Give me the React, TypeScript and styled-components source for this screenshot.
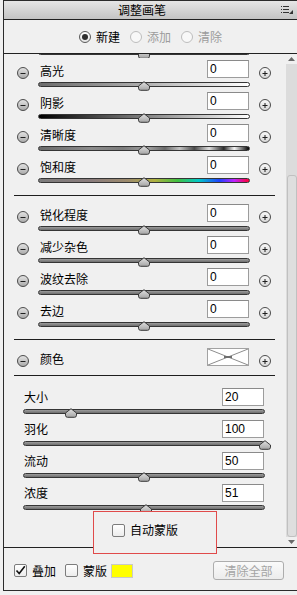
import React from 'react';
import styled, { createGlobalStyle } from 'styled-components';

const GlobalStyle = createGlobalStyle`
  html, body {
    margin: 0;
    padding: 0;
    background: #f0f0f0;
  }
  body {
    font-family: "Liberation Sans", "Noto Sans CJK SC", sans-serif;
    font-size: 12px;
    color: #000;
  }
  * {
    box-sizing: border-box;
  }
`;

// Layout
const Page = styled.div`
  position: relative;
  width: 297px;
  height: 595px;
  background: #f0f0f0;
  overflow: hidden;
`;

const Panel = styled.div`
  margin-left: 3px;
  border-left: 1px solid #2b2b2b;
  border-top: 1px solid #2b2b2b;
  border-bottom: 1px solid #2b2b2b;
  display: flex;
  flex-direction: column;
  background: #f0f0f0;
`;

const Header = styled.div`
  height: 19px;
  border-bottom: 1px solid #222;
  background: linear-gradient(#e6e6e6, #c4c4c4);
  display: flex;
  align-items: center;
  padding: 0 4px 0 114px;
`;

const Title = styled.span`
  flex: 1;
  font-family: "Noto Sans CJK SC", sans-serif;
  font-size: 12px;
  line-height: 18px;
`;

const RadioGroup = styled.div`
  height: 34px;
  border-bottom: 1px solid #222;
  display: flex;
  justify-content: center;
  align-items: center;
  gap: 10px;
  padding-top: 1px;
`;

const RadioItem = styled.label<{ $disabled?: boolean }>`
  display: flex;
  align-items: center;
  gap: 5px;
  color: ${(p) => (p.$disabled ? '#9c9c9c' : '#000')};
  font-family: "Noto Sans CJK SC", sans-serif;
  line-height: 16px;
`;

const RadioDot = styled.span<{ $checked?: boolean; $disabled?: boolean }>`
  width: 12px;
  height: 12px;
  border-radius: 50%;
  border: 1px solid ${(p) => (p.$disabled ? '#bdbdbd' : '#5a5a5a')};
  background: ${(p) => (p.$disabled ? '#f8f8f8' : 'linear-gradient(#ffffff, #e4e4e4)')};
  display: flex;
  align-items: center;
  justify-content: center;

  &::after {
    content: '';
    width: 6px;
    height: 6px;
    border-radius: 50%;
    background: #2e2e2e;
    display: ${(p) => (p.$checked ? 'block' : 'none')};
  }
`;

const ScrollArea = styled.div`
  height: 494px;
  border-bottom: 1px solid #222;
  display: flex;
`;

const Viewport = styled.div`
  flex: 1;
  overflow: hidden;
`;

// the bottom sliver of the row scrolled out above (对比度)
const ScrolledOut = styled.div`
  height: 4px;
  overflow: hidden;
  display: flex;
  flex-direction: column;
  justify-content: flex-end;
`;

const Divider = styled.div<{ $mt: number; $mb: number }>`
  height: 1px;
  background: #1e1e1e;
  margin: ${(p) => p.$mt}px 11px ${(p) => p.$mb}px 10px;
`;

// Adjustment rows
const AdjRow = styled.div`
  height: 32px;
  padding-top: 2px;
`;

const RowTop = styled.div<{ $brush?: boolean }>`
  height: 18px;
  display: flex;
  align-items: ${(p) => (p.$brush ? 'center' : 'flex-start')};
  padding: ${(p) => (p.$brush ? '0 22px 0 19px' : '0 15px 0 13px')};
`;

const RoundBtn = styled.span`
  display: block;
  width: 12px;
  height: 12px;
  margin-top: 7px;
  flex: none;
`;

const Label = styled.span<{ $brush?: boolean }>`
  flex: 1;
  margin-left: ${(p) => (p.$brush ? '1px' : '11px')};
  margin-top: ${(p) => (p.$brush ? '0' : '3px')};
  font-family: "Noto Sans CJK SC", sans-serif;
  line-height: 16px;
`;

const NumBox = styled.div`
  width: 42px;
  height: 18px;
  flex: none;
  border: 1px solid #9c9c9c;
  border-top-color: #8a8a8a;
  background: #fff;
  padding: 0 2px;
  line-height: 16px;
  font-size: 12px;
`;

const ColorBox = styled.div`
  width: 42px;
  height: 18px;
  flex: none;
  border: 1px solid #a2a2a2;
  background: #fff;
  display: flex;
`;

const PlusWrap = styled.span`
  margin-left: 10px;
  flex: none;
  display: block;
  width: 12px;
  height: 12px;
  margin-top: 7px;
`;

const SliderBox = styled.div<{ $ml: number; $w: number; $pt: number }>`
  position: relative;
  height: 12px;
  flex: none;
  margin-left: ${(p) => p.$ml}px;
  width: ${(p) => p.$w}px;
  padding-top: ${(p) => p.$pt}px;
`;

const Track = styled.div<{ $bg: string }>`
  height: 5px;
  border: 1px solid #353535;
  border-radius: 3px;
  background: ${(p) => p.$bg};
`;

const ThumbWrap = styled.span<{ $top: number }>`
  position: absolute;
  top: ${(p) => p.$top}px;
  width: 12px;
  height: 10px;
  transform: translateX(-50%);
  display: block;
`;

const ColorRow = styled.div`
  padding: 8px 15px 9px 13px;
  display: flex;
  align-items: flex-start;
  height: 35px;
`;

// Scrollbar
const ScrollBar = styled.div`
  width: 11px;
  display: flex;
  flex-direction: column;
`;

const ArrowBtn = styled.div`
  height: 10px;
  display: flex;
  align-items: center;
  justify-content: center;
`;

const SbTrack = styled.div`
  flex: 1;
  background: #dcdcdc;
  display: flex;
  flex-direction: column;
  padding: 111px 0 0 1px;
`;

const SbThumb = styled.div`
  flex: 1;
  background: #dedede;
  border: 1px solid #c0c0c0;
  border-radius: 3px;
`;

// Bottom bar
const BottomBar = styled.div`
  height: 42px;
  padding: 3px 13px 0 10px;
  display: flex;
  align-items: center;
`;

const CheckItem = styled.label`
  display: flex;
  align-items: center;
  gap: 5px;
  margin-right: 9px;
  font-family: "Noto Sans CJK SC", sans-serif;
  line-height: 16px;
`;

const CheckBox = styled.span`
  width: 13px;
  height: 13px;
  border: 1px solid #7c7c7c;
  border-radius: 2px;
  background: linear-gradient(#ffffff, #ececec);
  display: flex;
  align-items: center;
  justify-content: center;
`;

const Swatch = styled.span<{ $color: string }>`
  width: 22px;
  height: 14px;
  margin-left: -5px;
  background: ${(p) => p.$color};
  border: 1px solid #c9c9c9;
`;

const ClearButton = styled.button`
  margin-left: auto;
  width: 71px;
  height: 19px;
  border: 1px solid #adadad;
  border-radius: 3px;
  background: linear-gradient(#fafafa, #ececec);
  color: #a4a4a4;
  font-family: "Noto Sans CJK SC", sans-serif;
  font-size: 12px;
  line-height: 16px;
  padding: 0;
`;

// Annotation drawn over the panel
const Annotation = styled.div`
  position: absolute;
  left: 93px;
  top: 511px;
  width: 124px;
  height: 43px;
  border: 1px solid #e04a4a;
  background: #f0f0f0;
  padding: 11px 0 0 18px;
`;

const AutoMask = styled.label`
  display: flex;
  align-items: center;
  gap: 5px;
  font-family: "Noto Sans CJK SC", sans-serif;
  line-height: 14px;
`;

// Icons
const MinusIcon = () => (
  <svg width="12" height="12" viewBox="0 0 12 12">
    <defs>
      <linearGradient id="minusFill" x1="0" y1="0" x2="0" y2="1">
        <stop offset="0" stopColor="#e4e4e4" />
        <stop offset="1" stopColor="#a9a9a9" />
      </linearGradient>
    </defs>
    <circle cx="6" cy="6" r="5.5" fill="url(#minusFill)" stroke="#4c4c4c" />
    <line x1="3.5" y1="6.5" x2="8.5" y2="6.5" stroke="#1f1f1f" />
  </svg>
);

const PlusIcon = () => (
  <svg width="12" height="12" viewBox="0 0 12 12">
    <defs>
      <linearGradient id="plusFill" x1="0" y1="0" x2="0" y2="1">
        <stop offset="0" stopColor="#fbfbfb" />
        <stop offset="1" stopColor="#d6d6d6" />
      </linearGradient>
    </defs>
    <circle cx="6" cy="6" r="5.5" fill="url(#plusFill)" stroke="#4c4c4c" />
    <line x1="3.5" y1="6.5" x2="8.5" y2="6.5" stroke="#1f1f1f" />
    <line x1="6" y1="4" x2="6" y2="9" stroke="#1f1f1f" />
  </svg>
);

const ThumbIcon = () => (
  <svg width="12" height="10" viewBox="0 0 12 10">
    <defs>
      <linearGradient id="thumbFill" x1="0" y1="0" x2="0" y2="1">
        <stop offset="0" stopColor="#e2e2e2" />
        <stop offset="1" stopColor="#a4a4a4" />
      </linearGradient>
    </defs>
    <path
      d="M0.5 5 L6 0.7 L11.5 5 L11.5 7.2 Q11.5 9.3 9.5 9.3 L2.5 9.3 Q0.5 9.3 0.5 7.2 Z"
      fill="url(#thumbFill)"
      stroke="#3a3a3a"
    />
  </svg>
);

const PanelMenuIcon = () => (
  <svg width="12" height="8" viewBox="0 0 12 8">
    <rect x="0" y="0" width="1" height="1" fill="#333" />
    <rect x="0" y="3" width="1" height="1" fill="#333" />
    <rect x="0" y="6" width="1" height="1" fill="#333" />
    <rect x="2" y="0" width="6" height="1" fill="#333" />
    <rect x="2" y="3" width="6" height="1" fill="#333" />
    <rect x="2" y="6" width="6" height="1" fill="#333" />
    <path d="M12 4 L12 8 L8 8 Z" fill="#333" />
  </svg>
);

const CheckMark = () => (
  <svg width="11" height="11" viewBox="0 0 11 11">
    <path d="M1.5 5.5 L4.2 8.5 L9.8 1.2" fill="none" stroke="#111" strokeWidth="1.6" />
  </svg>
);

const ArrowIcon: React.FC<{ down?: boolean }> = ({ down }) => (
  <svg width="7" height="4" viewBox="0 0 7 4">
    <path d={down ? 'M0 0 L7 0 L3.5 4 Z' : 'M0 4 L7 4 L3.5 0 Z'} fill="#6a6a6a" />
  </svg>
);

const NoColorIcon = () => (
  <svg width="40" height="16" viewBox="0 0 40 16">
    <line x1="0" y1="0" x2="40" y2="16" stroke="#8c8c8c" />
    <line x1="40" y1="0" x2="0" y2="16" stroke="#8c8c8c" />
    <rect x="16" y="7" width="8" height="2" fill="#6e6e6e" />
  </svg>
);

// Track backgrounds
const PLAIN = 'linear-gradient(#9c9c9c, #6e6e6e)';
const TRACKS = {
  highlights: 'linear-gradient(to right, #6c6c6c, #a8a8a8 45%, #ffffff)',
  shadows: 'linear-gradient(to right, #000000, #808080 50%, #ffffff)',
  clarity:
    'linear-gradient(to right, #6a6a6a 0%, #8c8c8c 25%, #7c7c7c 40%, #a0a0a0 52%, #6a6a6a 60%, #c4c4c4 67%, #4a4a4a 74%, #dedede 81%, #2a2a2a 88%, #f4f4f4 93%, #000000 100%)',
  saturation:
    'linear-gradient(to right, #7c7c7c 0%, #8a7c7c 25%, #9c8a6c 42%, #b0b040 55%, #40c040 66%, #00c8c8 76%, #2040ff 86%, #c020ff 93%, #ff0030 100%)',
};

interface SliderProps {
  pct: number;
  ml: number;
  w: number;
  bg?: string;
  brush?: boolean;
}

const Slider: React.FC<SliderProps> = ({ pct, ml, w, bg = PLAIN, brush }) => (
  <SliderBox $ml={ml} $w={w} $pt={brush ? 3 : 4}>
    <Track $bg={bg} />
    <ThumbWrap $top={brush ? 1 : 2} style={{ left: `${pct}%` }}>
      <ThumbIcon />
    </ThumbWrap>
  </SliderBox>
);

interface AdjProps {
  label: string;
  value: number;
  bg?: string;
}

const Adjustment: React.FC<AdjProps> = ({ label, value, bg }) => (
  <AdjRow>
    <RowTop>
      <RoundBtn>
        <MinusIcon />
      </RoundBtn>
      <Label>{label}</Label>
      <NumBox>{value}</NumBox>
      <PlusWrap>
        <PlusIcon />
      </PlusWrap>
    </RowTop>
    <Slider pct={(value + 100) / 2} ml={34} w={212} bg={bg} />
  </AdjRow>
);

const BrushSetting: React.FC<{ label: string; value: number }> = ({ label, value }) => (
  <AdjRow>
    <RowTop $brush>
      <Label $brush>{label}</Label>
      <NumBox>{value}</NumBox>
    </RowTop>
    <Slider pct={value} ml={19} w={242} brush />
  </AdjRow>
);

const toneRows: AdjProps[] = [
  { label: '高光', value: 0, bg: TRACKS.highlights },
  { label: '阴影', value: 0, bg: TRACKS.shadows },
  { label: '清晰度', value: 0, bg: TRACKS.clarity },
  { label: '饱和度', value: 0, bg: TRACKS.saturation },
];

const detailRows: AdjProps[] = [
  { label: '锐化程度', value: 0 },
  { label: '减少杂色', value: 0 },
  { label: '波纹去除', value: 0 },
  { label: '去边', value: 0 },
];

const brushRows = [
  { label: '大小', value: 20 },
  { label: '羽化', value: 100 },
  { label: '流动', value: 50 },
  { label: '浓度', value: 51 },
];

export default function App() {
  return (
    <Page>
      <GlobalStyle />
      <Panel>
        <Header>
          <Title>调整画笔</Title>
          <PanelMenuIcon />
        </Header>

        <RadioGroup>
          <RadioItem>
            <RadioDot $checked />
            新建
          </RadioItem>
          <RadioItem $disabled>
            <RadioDot $disabled />
            添加
          </RadioItem>
          <RadioItem $disabled>
            <RadioDot $disabled />
            清除
          </RadioItem>
        </RadioGroup>

        <ScrollArea>
          <Viewport>
            <ScrolledOut>
              <Slider pct={50} ml={34} w={212} />
            </ScrolledOut>
            {toneRows.map((r) => (
              <Adjustment key={r.label} {...r} />
            ))}
            <Divider $mt={9} $mb={6} />
            {detailRows.map((r) => (
              <Adjustment key={r.label} {...r} />
            ))}
            <Divider $mt={9} $mb={0} />
            <ColorRow>
              <RoundBtn>
                <MinusIcon />
              </RoundBtn>
              <Label>颜色</Label>
              <ColorBox>
                <NoColorIcon />
              </ColorBox>
              <PlusWrap>
                <PlusIcon />
              </PlusWrap>
            </ColorRow>
            <Divider $mt={0} $mb={10} />
            {brushRows.map((r) => (
              <BrushSetting key={r.label} {...r} />
            ))}
          </Viewport>
          <ScrollBar>
            <ArrowBtn>
              <ArrowIcon />
            </ArrowBtn>
            <SbTrack>
              <SbThumb />
            </SbTrack>
            <ArrowBtn>
              <ArrowIcon down />
            </ArrowBtn>
          </ScrollBar>
        </ScrollArea>

        <BottomBar>
          <CheckItem>
            <CheckBox>
              <CheckMark />
            </CheckBox>
            叠加
          </CheckItem>
          <CheckItem>
            <CheckBox />
            蒙版
          </CheckItem>
          <Swatch $color="#ffff00" />
          <ClearButton disabled>清除全部</ClearButton>
        </BottomBar>
      </Panel>

      <Annotation>
        <AutoMask>
          <CheckBox />
          自动蒙版
        </AutoMask>
      </Annotation>
    </Page>
  );
}
